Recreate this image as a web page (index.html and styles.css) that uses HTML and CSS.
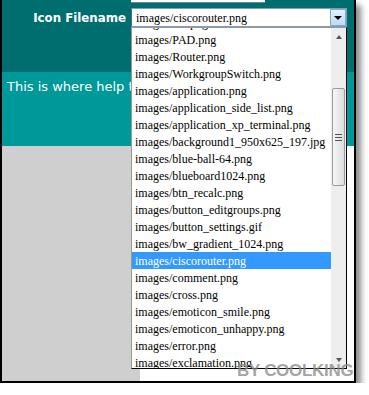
FILE: index.html
```html
<!DOCTYPE html>
<html lang="en">

<head>
    <meta charset="UTF-8" />
    <title>Icon Filename</title>
    <link rel="stylesheet" href="styles.css">
</head>

<body>
    <div class="window">
        <div class="header">
            <div class="prev-input"></div>
            <div class="field-row">
                <label class="field-label">Icon Filename</label>
                <div class="combo">
                    <div class="combo-box">
                        <span class="combo-value">images/ciscorouter.png</span>
                        <span class="combo-arrow"></span>
                    </div>
                    <div class="dropdown">
                        <div class="options">
                            <ul>
                                <li>images/PC.png</li>
                                <li>images/PAD.png</li>
                                <li>images/Router.png</li>
                                <li>images/WorkgroupSwitch.png</li>
                                <li>images/application.png</li>
                                <li>images/application_side_list.png</li>
                                <li>images/application_xp_terminal.png</li>
                                <li>images/background1_950x625_197.jpg</li>
                                <li>images/blue-ball-64.png</li>
                                <li>images/blueboard1024.png</li>
                                <li>images/btn_recalc.png</li>
                                <li>images/button_editgroups.png</li>
                                <li>images/button_settings.gif</li>
                                <li>images/bw_gradient_1024.png</li>
                                <li class="selected">images/ciscorouter.png</li>
                                <li>images/comment.png</li>
                                <li>images/cross.png</li>
                                <li>images/emoticon_smile.png</li>
                                <li>images/emoticon_unhappy.png</li>
                                <li>images/error.png</li>
                                <li>images/exclamation.png</li>
                                <li>images/folder.png</li>
                            </ul>
                        </div>
                        <div class="scrollbar">
                            <div class="sb-btn sb-up"></div>
                            <div class="sb-track">
                                <div class="sb-thumb"><span class="sb-grip"></span></div>
                            </div>
                            <div class="sb-btn sb-down"></div>
                        </div>
                    </div>
                </div>
            </div>
        </div>

        <div class="help">This is where help text is shown for each field.</div>

        <div class="content">
            <div class="side"></div>
            <div class="main"></div>
        </div>

        <div class="watermark">BY COOLKING</div>
    </div>
</body>

</html>
```

FILE: styles.css
```css
html,
body {
    margin: 0;
    background: #fff;
}

.window {
    position: relative;
    width: 356px;
    height: 383px;
    box-sizing: border-box;
    border: 2px solid #000;
    border-top: 0;
    box-shadow: 5px 5px 6px rgba(0, 0, 0, 0.45);
    display: flex;
    flex-direction: column;
    background: #fff;
}

.header {
    flex: none;
    height: 72px;
    background: #006e6e;
}

.prev-input {
    margin-left: 129px;
    width: 134px;
    height: 2px;
    background: #fff;
    border-bottom: 1px solid #6a8a8a;
}

.field-row {
    display: flex;
    align-items: center;
    margin-top: 5px;
}

.field-label {
    width: 129px;
    box-sizing: border-box;
    padding-right: 5px;
    text-align: right;
    color: #fff;
    font: bold 11.8px "DejaVu Sans", sans-serif;
}

.combo {
    position: relative;
    width: 216px;
    height: 19px;
}

.combo-box {
    display: flex;
    height: 100%;
    box-sizing: border-box;
    border: 1px solid #7f9db9;
    border-left-color: #4d6d7d;
    background: #fff;
}

.combo-value {
    flex: 1;
    padding-left: 4px;
    font: 12px/18px "Liberation Serif", serif;
    color: #000;
}

.combo-arrow {
    width: 16px;
    box-sizing: border-box;
    border: 1px solid #86a9c9;
    background: linear-gradient(to bottom, #e4f1fb, #b9dcf5);
    display: flex;
    align-items: center;
    justify-content: center;
}

.combo-arrow::before {
    content: "";
    border-left: 4px solid transparent;
    border-right: 4px solid transparent;
    border-top: 4px solid #000;
}

.dropdown {
    position: absolute;
    top: 19px;
    left: 0;
    width: 216px;
    height: 342px;
    box-sizing: border-box;
    border: 1px solid #000;
    border-left-color: #999;
    border-top-color: #999;
    display: flex;
    background: #fff;
}

.options {
    flex: 1;
    overflow: hidden;
}

.options ul {
    margin: -14px 0 0;
    padding: 0;
    list-style: none;
}

.options li {
    height: 16px;
    padding: 1px 0 0 3px;
    line-height: 17px;
    white-space: nowrap;
    font-family: "Liberation Serif", serif;
    font-size: 12px;
    color: #000;
}

.options li.selected {
    background: #3399ff;
    color: #fff;
}

.scrollbar {
    width: 15px;
    display: flex;
    flex-direction: column;
    background: #eeeeee;
}

.sb-btn {
    height: 17px;
    display: flex;
    align-items: center;
    justify-content: center;
}

.sb-up::before {
    content: "";
    border-left: 3px solid transparent;
    border-right: 3px solid transparent;
    border-bottom: 4px solid #555;
}

.sb-down::before {
    content: "";
    border-left: 3px solid transparent;
    border-right: 3px solid transparent;
    border-top: 4px solid #555;
}

.sb-track {
    flex: 1;
}

.sb-thumb {
    margin: 43px 0 0 1px;
    width: 13px;
    height: 98px;
    box-sizing: border-box;
    border: 1px solid #9a9a9a;
    border-radius: 2px;
    background: linear-gradient(to right, #f7f7f7, #dcdcdc);
    display: flex;
    align-items: center;
    justify-content: center;
}

.sb-grip {
    width: 7px;
    height: 7px;
    background: repeating-linear-gradient(to bottom, #555 0, #555 1px, transparent 1px, transparent 3px);
}

.help {
    flex: none;
    height: 74px;
    box-sizing: border-box;
    padding: 7px 0 0 5px;
    background: #009999;
    color: #fff;
    font: 13px "DejaVu Sans", sans-serif;
    white-space: nowrap;
    overflow: hidden;
}

.content {
    flex: 1;
    display: flex;
}

.side {
    width: 138px;
    background: #cfcfcf;
}

.main {
    flex: 1;
    background: #fff;
}

.watermark {
    position: absolute;
    left: 235px;
    top: 361px;
    font: bold 17px "Liberation Sans", sans-serif;
    letter-spacing: -0.3px;
    color: rgba(140, 140, 140, 0.8);
    white-space: nowrap;
}
```
